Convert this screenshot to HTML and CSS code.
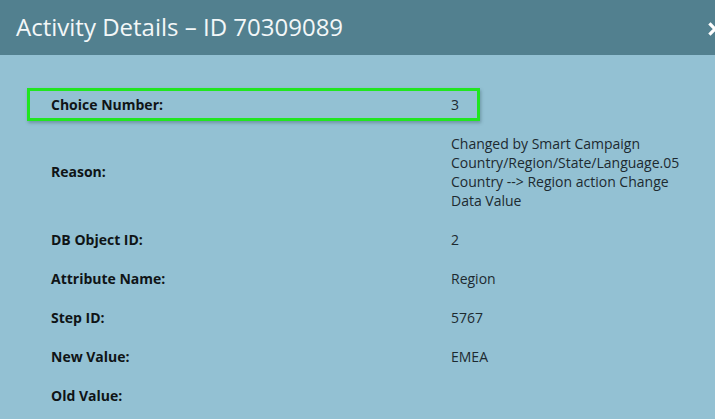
FILE: index.html
```html
<!DOCTYPE html>
<html>
<head>
<meta charset="utf-8">
<link rel="stylesheet" href="styles.css">
</head>
<body>
<div class="modal">
  <div class="modal-header">
    <h1 class="title">Activity Details – ID 70309089</h1>
    <span class="close">
      <svg width="14" height="14" viewBox="0 0 14 14"><path d="M2.5 2.5 L11.5 11.5 M11.5 2.5 L2.5 11.5" stroke="#ffffff" stroke-width="3.2" stroke-linecap="square" fill="none"/></svg>
    </span>
  </div>
  <div class="modal-body">
    <div class="row highlight">
      <div class="label">Choice Number:</div>
      <div class="value">3</div>
    </div>
    <div class="row">
      <div class="label">Reason:</div>
      <div class="value">Changed by Smart Campaign Country/Region/State/Language.05 Country --&gt; Region action Change Data Value</div>
    </div>
    <div class="row">
      <div class="label">DB Object ID:</div>
      <div class="value">2</div>
    </div>
    <div class="row">
      <div class="label">Attribute Name:</div>
      <div class="value">Region</div>
    </div>
    <div class="row">
      <div class="label">Step ID:</div>
      <div class="value">5767</div>
    </div>
    <div class="row">
      <div class="label">New Value:</div>
      <div class="value">EMEA</div>
    </div>
    <div class="row">
      <div class="label">Old Value:</div>
      <div class="value"></div>
    </div>
  </div>
</div>
</body>
</html>
```

FILE: styles.css
```css
html, body {
  margin: 0;
  padding: 0;
  height: 100%;
  overflow: hidden;
}
body {
  background: #93c1d3;
  font-family: "Open Sans", "Liberation Sans", sans-serif;
}
.modal {
  display: flex;
  flex-direction: column;
}
.modal-header {
  height: 55px;
  background: #52808f;
  display: flex;
  align-items: center;
  padding-left: 16px;
}
.title {
  margin: 0;
  font-size: 24px;
  font-weight: 400;
  color: #f3f7f8;
  line-height: 30px;
  margin-top: -1px;
}
.close {
  margin-left: auto;
  margin-right: -7px;
  display: flex;
  margin-top: 2px;
}
.modal-body {
  padding: 29.5px 0 0 27px;
  display: flex;
  flex-direction: column;
}
.row {
  display: grid;
  grid-template-columns: 400px 236px;
  align-items: center;
  padding: 10px 0 10px 24px;
  font-size: 14px;
  line-height: 19px;
  color: #141c20;
}
.row.highlight {
  width: 453px;
  box-sizing: border-box;
  grid-template-columns: 400px 1fr;
  margin: 3px 0 3px;
  padding: 4px 0 4px 21px;
  border: 3px solid #20e620;
  box-shadow: 1px 2px 3px rgba(40, 70, 80, 0.35);
}
.label {
  font-weight: 700;
  color: #0f1416;
}
.value {
  font-weight: 400;
  color: #1d2a30;
}
```
